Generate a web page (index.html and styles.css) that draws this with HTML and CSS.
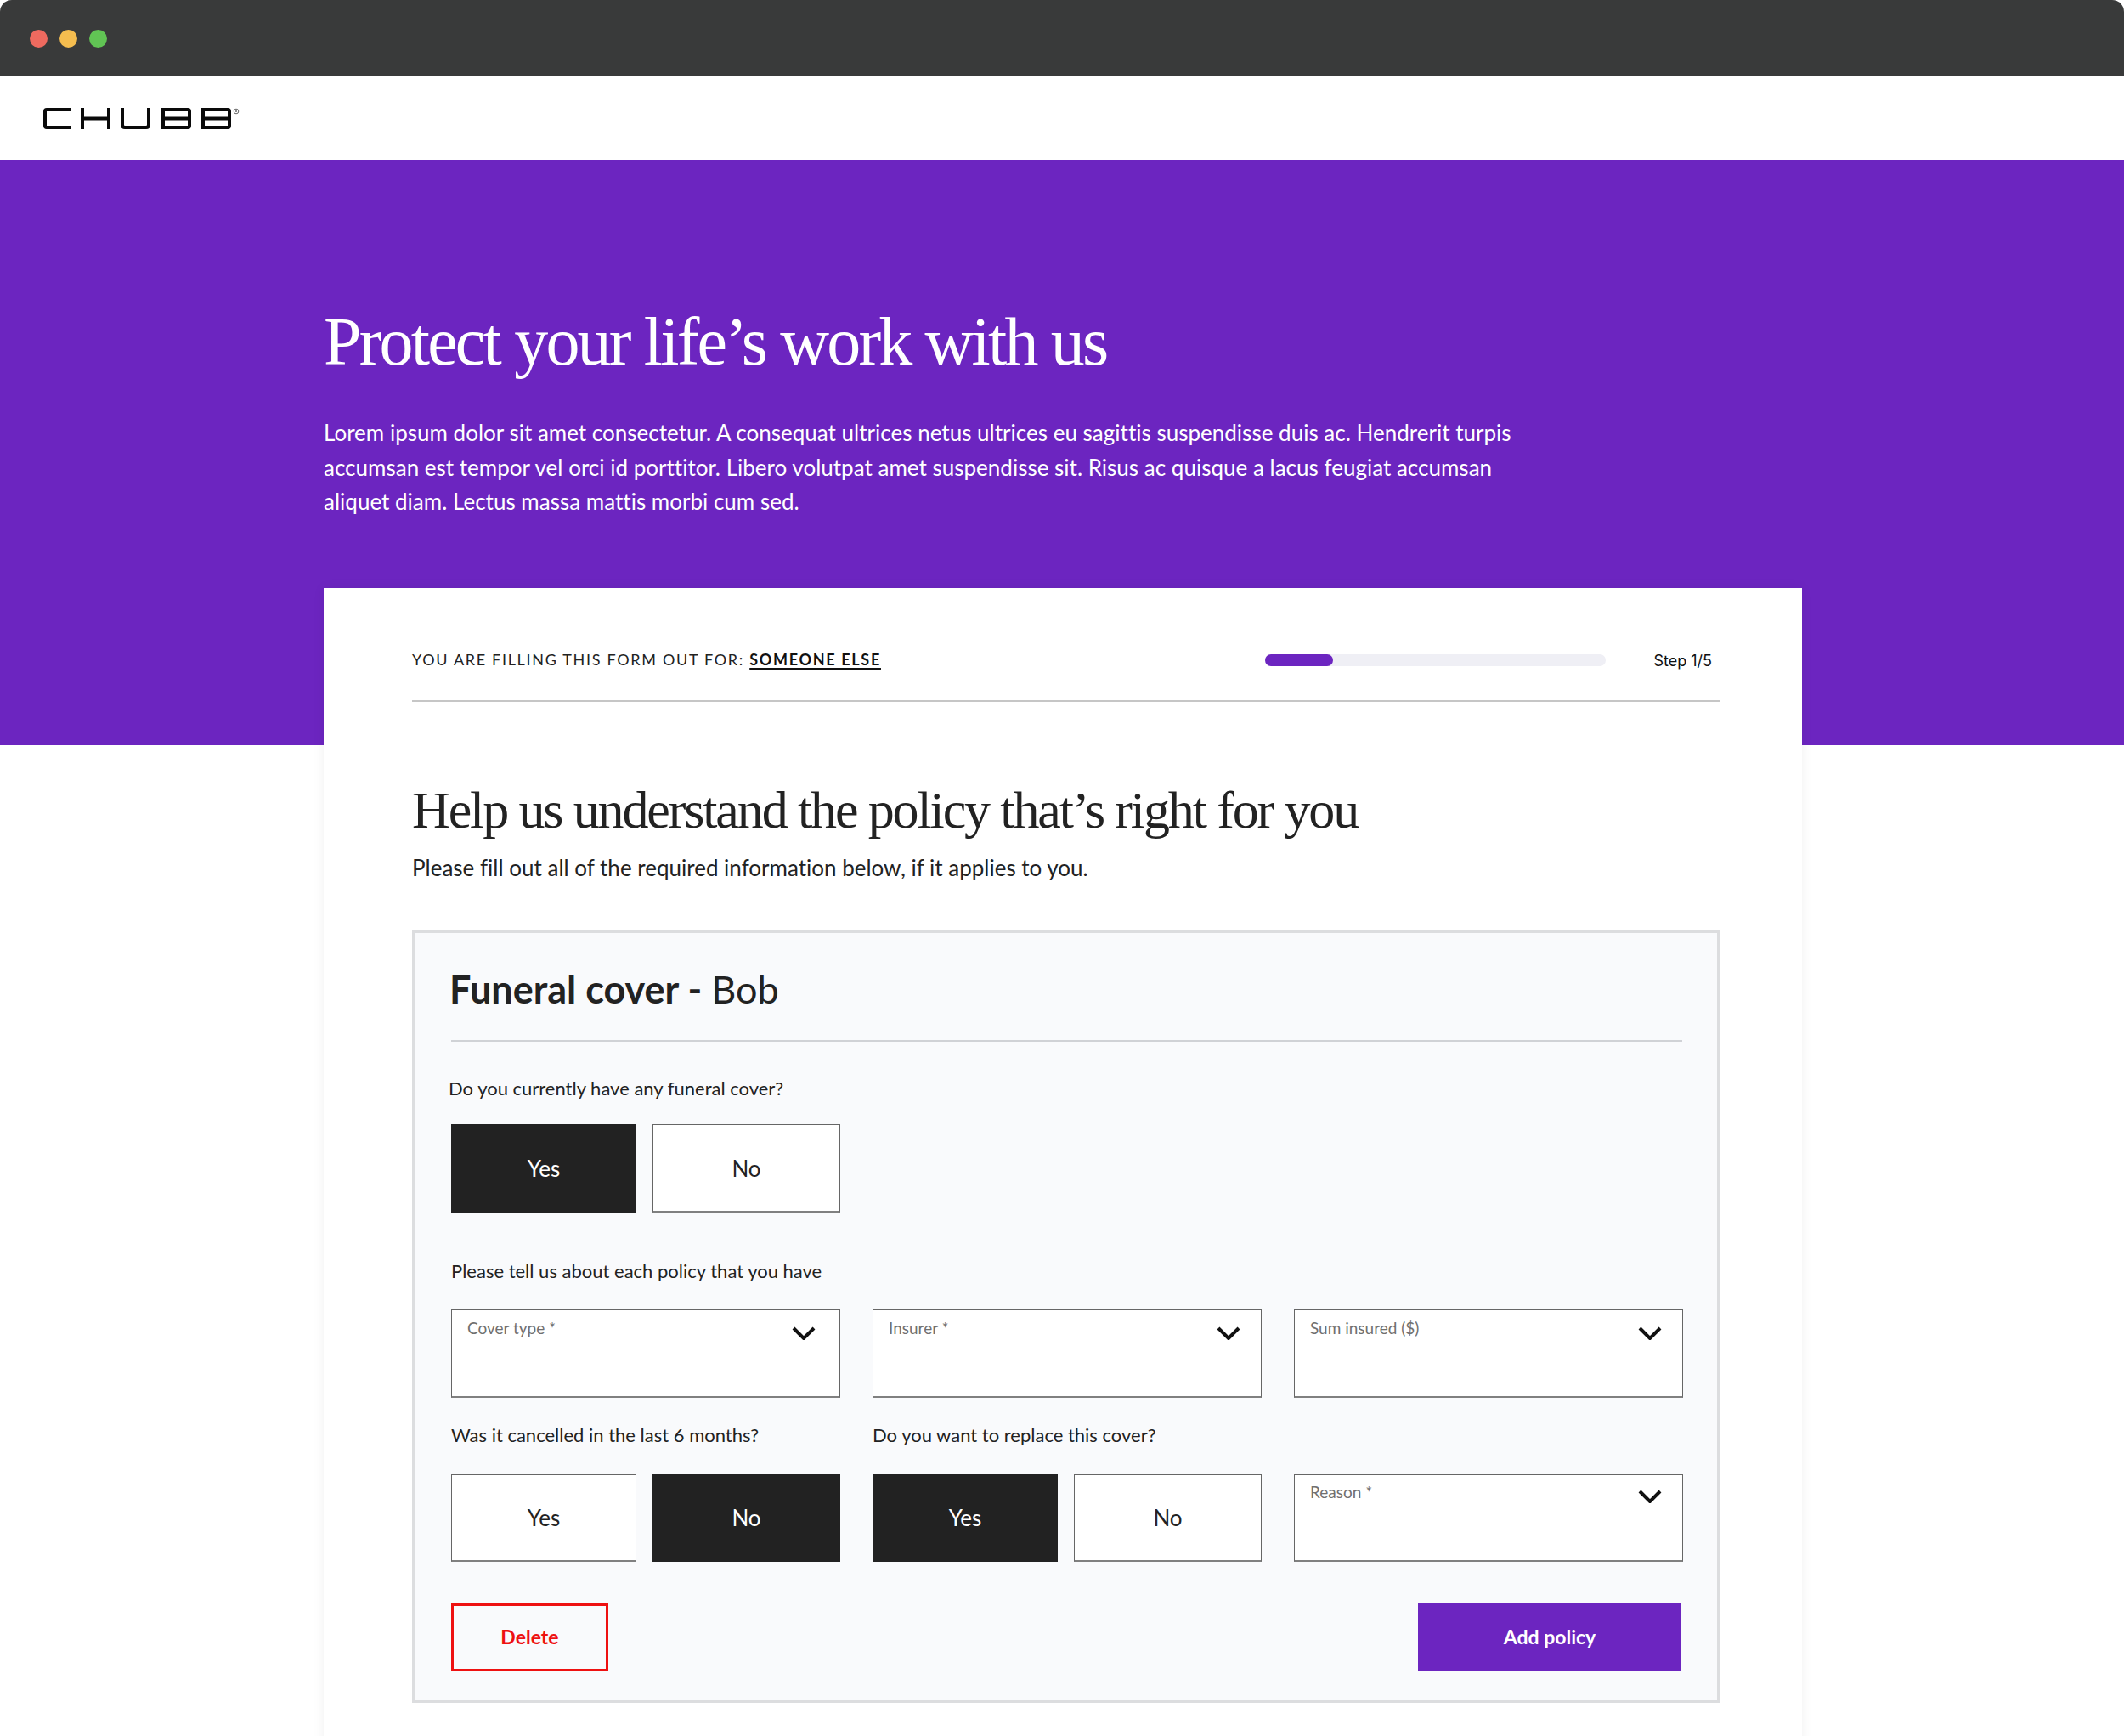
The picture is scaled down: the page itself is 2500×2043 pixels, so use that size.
FILE: index.html
```html
<!DOCTYPE html>
<html lang="en">
<head>
<meta charset="utf-8">
<title>Chubb – Protect your life's work with us</title>
<link rel="stylesheet" href="styles.css">
</head>
<body>
<div class="titlebar">
  <span class="dot dot-red"></span><span class="dot dot-yellow"></span><span class="dot dot-green"></span>
</div>
<header class="site-header">
  <svg class="logo" width="232" height="28" viewBox="0 0 232 28" role="img" aria-label="Chubb">
    <g fill="none" stroke="#0a0a0a" stroke-width="4">
      <path d="M33 3H5Q3 3 3 5V22Q3 24 5 24H33"/>
      <path d="M47 1V26M78 1V26M47 13.5H78"/>
      <path d="M94 1V21Q94 24 97 24H122Q125 24 125 21V1"/>
      <path d="M142 3H171Q173 3 173 5V22Q173 24 171 24H142ZM142 13.5H173"/>
      <path d="M189 3H218Q220 3 220 5V22Q220 24 218 24H189ZM189 13.5H220"/>
    </g>
    <circle cx="228" cy="5" r="2.8" fill="none" stroke="#666" stroke-width="1"/>
    <circle cx="228" cy="5" r="1" fill="#666"/>
  </svg>
</header>
<main>
  <section class="hero">
    <h1>Protect your life’s work with us</h1>
    <p>Lorem ipsum dolor sit amet consectetur. A consequat ultrices netus ultrices eu sagittis suspendisse duis ac. Hendrerit turpis<br>accumsan est tempor vel orci id porttitor. Libero volutpat amet suspendisse sit. Risus ac quisque a lacus feugiat accumsan<br>aliquet diam. Lectus massa mattis morbi cum sed.</p>
  </section>
  <section class="card">
    <div class="form-head">
      <div class="filling">YOU ARE FILLING THIS FORM OUT FOR: <a class="filling-who">SOMEONE ELSE</a></div>
      <div class="progress"><div class="progress-fill"></div></div>
      <div class="step">Step 1/5</div>
    </div>
    <h2>Help us understand the policy that’s right for you</h2>
    <p class="sub">Please fill out all of the required information below, if it applies to you.</p>
    <div class="policy">
      <h3 class="policy-title">Funeral cover - <span class="policy-name">Bob</span></h3>
      <div class="q q-first">Do you currently have any funeral cover?</div>
      <div class="toggle toggle-first">
        <div class="opt opt-on">Yes</div>
        <div class="opt">No</div>
      </div>
      <div class="q q-second">Please tell us about each policy that you have</div>
      <div class="fields">
        <div class="select"><span class="select-label">Cover type *</span>
          <svg class="chev chev-first" width="28" height="16" viewBox="0 0 28 16"><path d="M2 2L14 14L26 2"/></svg></div>
        <div class="select"><span class="select-label">Insurer *</span>
          <svg class="chev" width="28" height="16" viewBox="0 0 28 16"><path d="M2 2L14 14L26 2"/></svg></div>
        <div class="select"><span class="select-label">Sum insured ($)</span>
          <svg class="chev" width="28" height="16" viewBox="0 0 28 16"><path d="M2 2L14 14L26 2"/></svg></div>

        <div class="q q-row">Was it cancelled in the last 6 months?</div>
        <div class="q q-row">Do you want to replace this cover?</div>
        <div class="q-row"></div>

        <div class="toggle toggle-short">
          <div class="opt">Yes</div>
          <div class="opt opt-on">No</div>
        </div>
        <div class="toggle toggle-short">
          <div class="opt opt-on">Yes</div>
          <div class="opt">No</div>
        </div>
        <div class="select select-short"><span class="select-label">Reason *</span>
          <svg class="chev" width="28" height="16" viewBox="0 0 28 16"><path d="M2 2L14 14L26 2"/></svg></div>
      </div>
      <div class="actions">
        <div class="btn-delete">Delete</div>
        <div class="btn-add">Add policy</div>
      </div>
    </div>
  </section>
</main>
</body>
</html>
```
FILE: styles.css
```css
* { box-sizing: border-box; }
html, body { margin: 0; padding: 0; background: #fff; }
body { height: 2043px; overflow: hidden; font-family: "Lato", "Liberation Sans", sans-serif; color: #222; font-variant-ligatures: none; }

.titlebar { height: 90px; background: #393a3a; border-radius: 14px 14px 0 0; display: flex; align-items: center; gap: 14px; padding-left: 35px; }
.dot { width: 21px; height: 21px; border-radius: 50%; }
.dot-red { background: #ee6a5f; }
.dot-yellow { background: #f5bd4f; }
.dot-green { background: #61c454; }

.site-header { height: 98px; display: flex; align-items: center; padding-left: 50px; background: #fff; }
.logo { display: block; margin-top: 1px; }

.hero { height: 689px; background: #6c25c0; padding: 169px 0 0 381px; color: #fff; }
.hero h1 { margin: 0; font: 400 80px/90px "Liberation Serif", serif; letter-spacing: -2.8px; }
.hero p { margin: 42px 0 0; font-size: 26px; line-height: 40.5px; letter-spacing: .01px; }

.card { width: 1740px; margin: -185px 0 0 381px; padding: 0 97px 0 104px; background: #fff; box-shadow: 0 0 14px rgba(0,0,0,.06); height: 1400px; }

.form-head { height: 134px; padding-top: 36px; border-bottom: 2px solid #c6c6c6; display: flex; align-items: center; }
.filling { font-size: 18px; letter-spacing: 1.68px; color: #222; }
.filling-who { font-weight: 700; color: #111; text-decoration: underline; text-decoration-thickness: 2px; text-underline-offset: 3px; }
.progress { width: 401px; height: 14px; margin: 1px 0 0 auto; background: #efeff5; border-radius: 7px; }
.progress-fill { width: 80px; height: 14px; background: #6c25c0; border-radius: 7px; }
.step { margin: 3px 9px 0 56px; font: 400 18px/1 "Inter", "Roboto", sans-serif; color: #111; }

h2 { margin: 92px 0 0; font: 400 62px/70px "Liberation Serif", serif; letter-spacing: -2.12px; color: #222; }
.sub { margin: 15px 0 0; font-size: 26px; line-height: 36px; color: #222; }

.policy { height: 909px; margin-top: 56px; padding: 38px 41px 34px 43px; background: #f9fafc; border: 3px solid #dcdddf; }
.policy-title { margin: 0; text-indent: -2px; height: 90px; padding-bottom: 32px; border-bottom: 2px solid #d0d2d6; font-size: 45px; line-height: 56px; font-weight: 700; color: #222; }
.policy-name { font-weight: 400; }

.q { font-size: 22px; line-height: 30px; color: #222; }
.q-first { margin: 40px 0 27px -3px; }
.q-second { margin: 54px 0 30px; }
.q-row { margin: 29px 0 31px; }

.fields { display: grid; grid-template-columns: repeat(3, 458px); column-gap: 38px; }
.toggle { display: grid; grid-template-columns: 218px 221px; column-gap: 19px; width: 458px; }
.opt { height: 104px; display: flex; align-items: center; justify-content: center; font-size: 26px; background: #fff; border: 1px solid #666; border-bottom: 2px solid #808080; color: #222; }
.opt-on { background: #222; border-color: #222; color: #fff; }
.toggle-short .opt { height: 103px; }

.select { position: relative; height: 104px; padding: 8px 18px; background: #fff; border: 1px solid #666; border-bottom: 2px solid #808080; }
.select-short { height: 103px; padding-top: 7px; }
.select-label { font-size: 19px; line-height: 26px; color: #707070; display: block; }
.chev { position: absolute; top: 19px; right: 24px; }
.select-short .chev { top: 17px; }
.chev-first { right: 28px; }
.chev path { fill: none; stroke: #111; stroke-width: 4; }

.actions { display: flex; justify-content: space-between; align-items: flex-start; margin-top: 49px; }
.btn-delete { width: 185px; height: 80px; padding-bottom: 2px; display: flex; align-items: center; justify-content: center; border: 3px solid #ee1111; color: #ee1111; font-size: 23px; font-weight: 700; }
.btn-add { width: 310px; height: 79px; margin-right: 1px; padding-bottom: 2px; display: flex; align-items: center; justify-content: center; background: #6c25c0; color: #fff; font-size: 23px; font-weight: 700; }
```
